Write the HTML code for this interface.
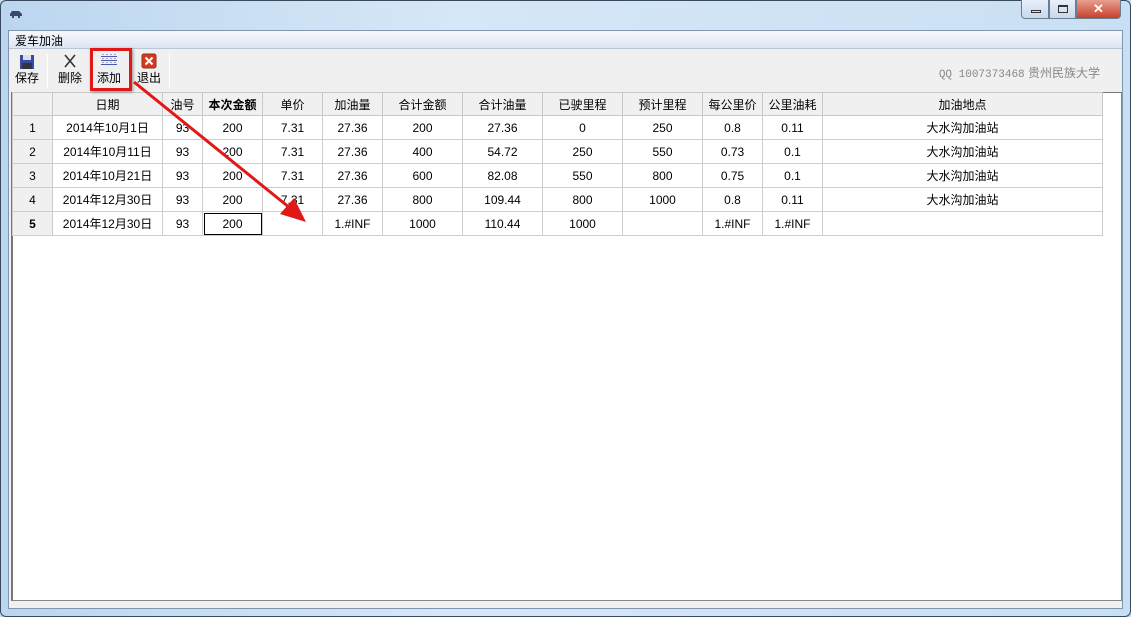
<!DOCTYPE html>
<html><head><meta charset="utf-8"><style>
*{margin:0;padding:0;box-sizing:border-box}
body{width:1131px;height:617px;overflow:hidden;background:#c4daf0;font-family:"Liberation Sans","Noto Sans CJK SC",sans-serif;font-size:12px;color:#000;position:relative}
.frame{position:absolute;left:0;top:0;width:1131px;height:617px;border:1px solid #3a4a5c;border-radius:6px;background:linear-gradient(90deg,#bcd6ef,#d6e7f7 40%,#c9dff3);}
.client{position:absolute;left:8px;top:30px;width:1115px;height:579px;background:#f0f0f0;border:1px solid #8096b0}
.menu{position:absolute;left:0;top:0;width:100%;height:18px;background:linear-gradient(#f6f8fc,#dde6f3);border-bottom:1px solid #b8c6d8}
.menu span{position:absolute;left:6px;top:1px;font-size:12px}
.tb{position:absolute;left:0;top:19px;width:100%;height:40px;background:#f0f0f0}
.btn{position:absolute;top:3px;height:34px;text-align:center;font-size:12px}
.btn .lbl{position:absolute;bottom:1px;left:0;right:0}
.sep{position:absolute;top:4px;width:1px;height:34px;background:#c8c8c8;border-right:1px solid #fff}
.qq{position:absolute;right:22px;top:14px;color:#888;font-size:12px}
.qq b{font-family:"Liberation Mono",monospace;font-weight:normal;font-size:11px}
.grid{position:absolute;left:2px;top:61px;width:1111px;height:509px;background:#fff;border:1px solid #888;border-top-color:#777;border-left:2px solid #777}
table{border-collapse:collapse;position:absolute;left:-1px;top:-1px}
td{border:1px solid #ccc;height:24px;text-align:center;font-size:12px;padding:0}
tr.h td{background:#f0f0f0;border-color:#c8c8c8;height:23px}
td.rh{background:#f0f0f0}
.win{position:absolute;top:0;height:19px;border:1px solid #6b7d92;border-top:none}
</style></head><body>
<div class="frame"></div>
<svg style="position:absolute;left:9px;top:10px" width="14" height="8"><path d="M1 6 L1 4 L3 1 L10 1 L13 4 L13 6 Z" fill="#3a4a6a"/><circle cx="4" cy="7" r="1" fill="#222"/><circle cx="10" cy="7" r="1" fill="#222"/></svg>
<div class="win" style="left:1021px;width:28px;border-radius:0 0 0 4px;background:linear-gradient(#e8f0fa,#c8d8ec)"><div style="position:absolute;left:9px;top:10px;width:10px;height:3px;border:1px solid #333"></div></div>
<div class="win" style="left:1049px;width:27px;background:linear-gradient(#e8f0fa,#c8d8ec)"><div style="position:absolute;left:8px;top:5px;width:10px;height:8px;border:1px solid #333;border-top-width:2px"></div></div>
<div class="win" style="left:1076px;width:45px;border-radius:0 0 4px 0;background:linear-gradient(#e8a090,#c8402c);color:#fff;text-align:center;font-weight:bold;font-size:13px;line-height:18px">✕</div>
<div class="client">
<div class="menu"><span>爱车加油</span></div>
<div class="tb">
 <div class="btn" style="left:2px;width:32px"><svg width="16" height="16" style="margin-top:1px"><rect x="1" y="1" width="14" height="14" fill="#3a4aa0"/><rect x="4" y="1" width="8" height="5" fill="#dde"/><rect x="3" y="9" width="10" height="6" fill="#334"/></svg><div class="lbl">保存</div></div>
 <div class="sep" style="left:38px"></div>
 <div class="btn" style="left:44px;width:34px"><svg width="16" height="16"><path d="M3 2 L13 14 M13 2 L3 14" stroke="#333" stroke-width="1.6"/></svg><div class="lbl">删除</div></div>
 <div class="sep" style="left:81px"></div>
 <div class="btn" style="left:84px;width:32px"><svg width="18" height="14"><rect x="1" y="3" width="16" height="1" fill="#4a5ab0"/><rect x="1" y="7" width="16" height="1" fill="#4a5ab0"/><rect x="1" y="11" width="16" height="1" fill="#4a5ab0"/><path d="M3 1V13M7 1V13M11 1V13M15 1V13" stroke="#4a5ab0" stroke-dasharray="1 1"/></svg><div class="lbl">添加</div></div>
 <div class="btn" style="left:124px;width:32px"><svg width="16" height="16"><rect x="1" y="1" width="14" height="14" rx="2" fill="#d83820" stroke="#903020"/><path d="M4.5 4.5 L11.5 11.5 M11.5 4.5 L4.5 11.5" stroke="#fff" stroke-width="2"/></svg><div class="lbl">退出</div></div>
 <div class="sep" style="left:160px"></div>
 <div class="qq"><b>QQ 1007373468</b> 贵州民族大学</div>
</div>
<div class="grid">
<table>
<colgroup><col style="width:40px"><col style="width:110px"><col style="width:40px"><col style="width:60px"><col style="width:60px"><col style="width:60px"><col style="width:80px"><col style="width:80px"><col style="width:80px"><col style="width:80px"><col style="width:60px"><col style="width:60px"><col style="width:280px"></colgroup>
<tr class="h"><td></td><td>日期</td><td>油号</td><td style="font-weight:bold">本次金额</td><td>单价</td><td>加油量</td><td>合计金额</td><td>合计油量</td><td>已驶里程</td><td>预计里程</td><td>每公里价</td><td>公里油耗</td><td>加油地点</td></tr>
<tr><td class="rh">1</td><td>2014年10月1日</td><td>93</td><td>200</td><td>7.31</td><td>27.36</td><td>200</td><td>27.36</td><td>0</td><td>250</td><td>0.8</td><td>0.11</td><td>大水沟加油站</td></tr>
<tr><td class="rh">2</td><td>2014年10月11日</td><td>93</td><td>200</td><td>7.31</td><td>27.36</td><td>400</td><td>54.72</td><td>250</td><td>550</td><td>0.73</td><td>0.1</td><td>大水沟加油站</td></tr>
<tr><td class="rh">3</td><td>2014年10月21日</td><td>93</td><td>200</td><td>7.31</td><td>27.36</td><td>600</td><td>82.08</td><td>550</td><td>800</td><td>0.75</td><td>0.1</td><td>大水沟加油站</td></tr>
<tr><td class="rh">4</td><td>2014年12月30日</td><td>93</td><td>200</td><td>7.31</td><td>27.36</td><td>800</td><td>109.44</td><td>800</td><td>1000</td><td>0.8</td><td>0.11</td><td>大水沟加油站</td></tr>
<tr><td class="rh" style="font-weight:bold">5</td><td>2014年12月30日</td><td>93</td><td style="outline:1px solid #000;outline-offset:-2px">200</td><td></td><td>1.#INF</td><td>1000</td><td>110.44</td><td>1000</td><td></td><td>1.#INF</td><td>1.#INF</td><td></td></tr>
</table>
</div>
</div>
<div style="position:absolute;left:90px;top:48px;width:42px;height:43px;border:3px solid #e01818;box-shadow:1px 1px 3px rgba(0,0,0,.4)"></div>
<svg style="position:absolute;left:0;top:0" width="1131" height="617"><line x1="134" y1="82" x2="290" y2="208" stroke="#e01818" stroke-width="3"/><path d="M306 222 L280 214 L294 198 Z" fill="#e01818"/></svg>
</body></html>
